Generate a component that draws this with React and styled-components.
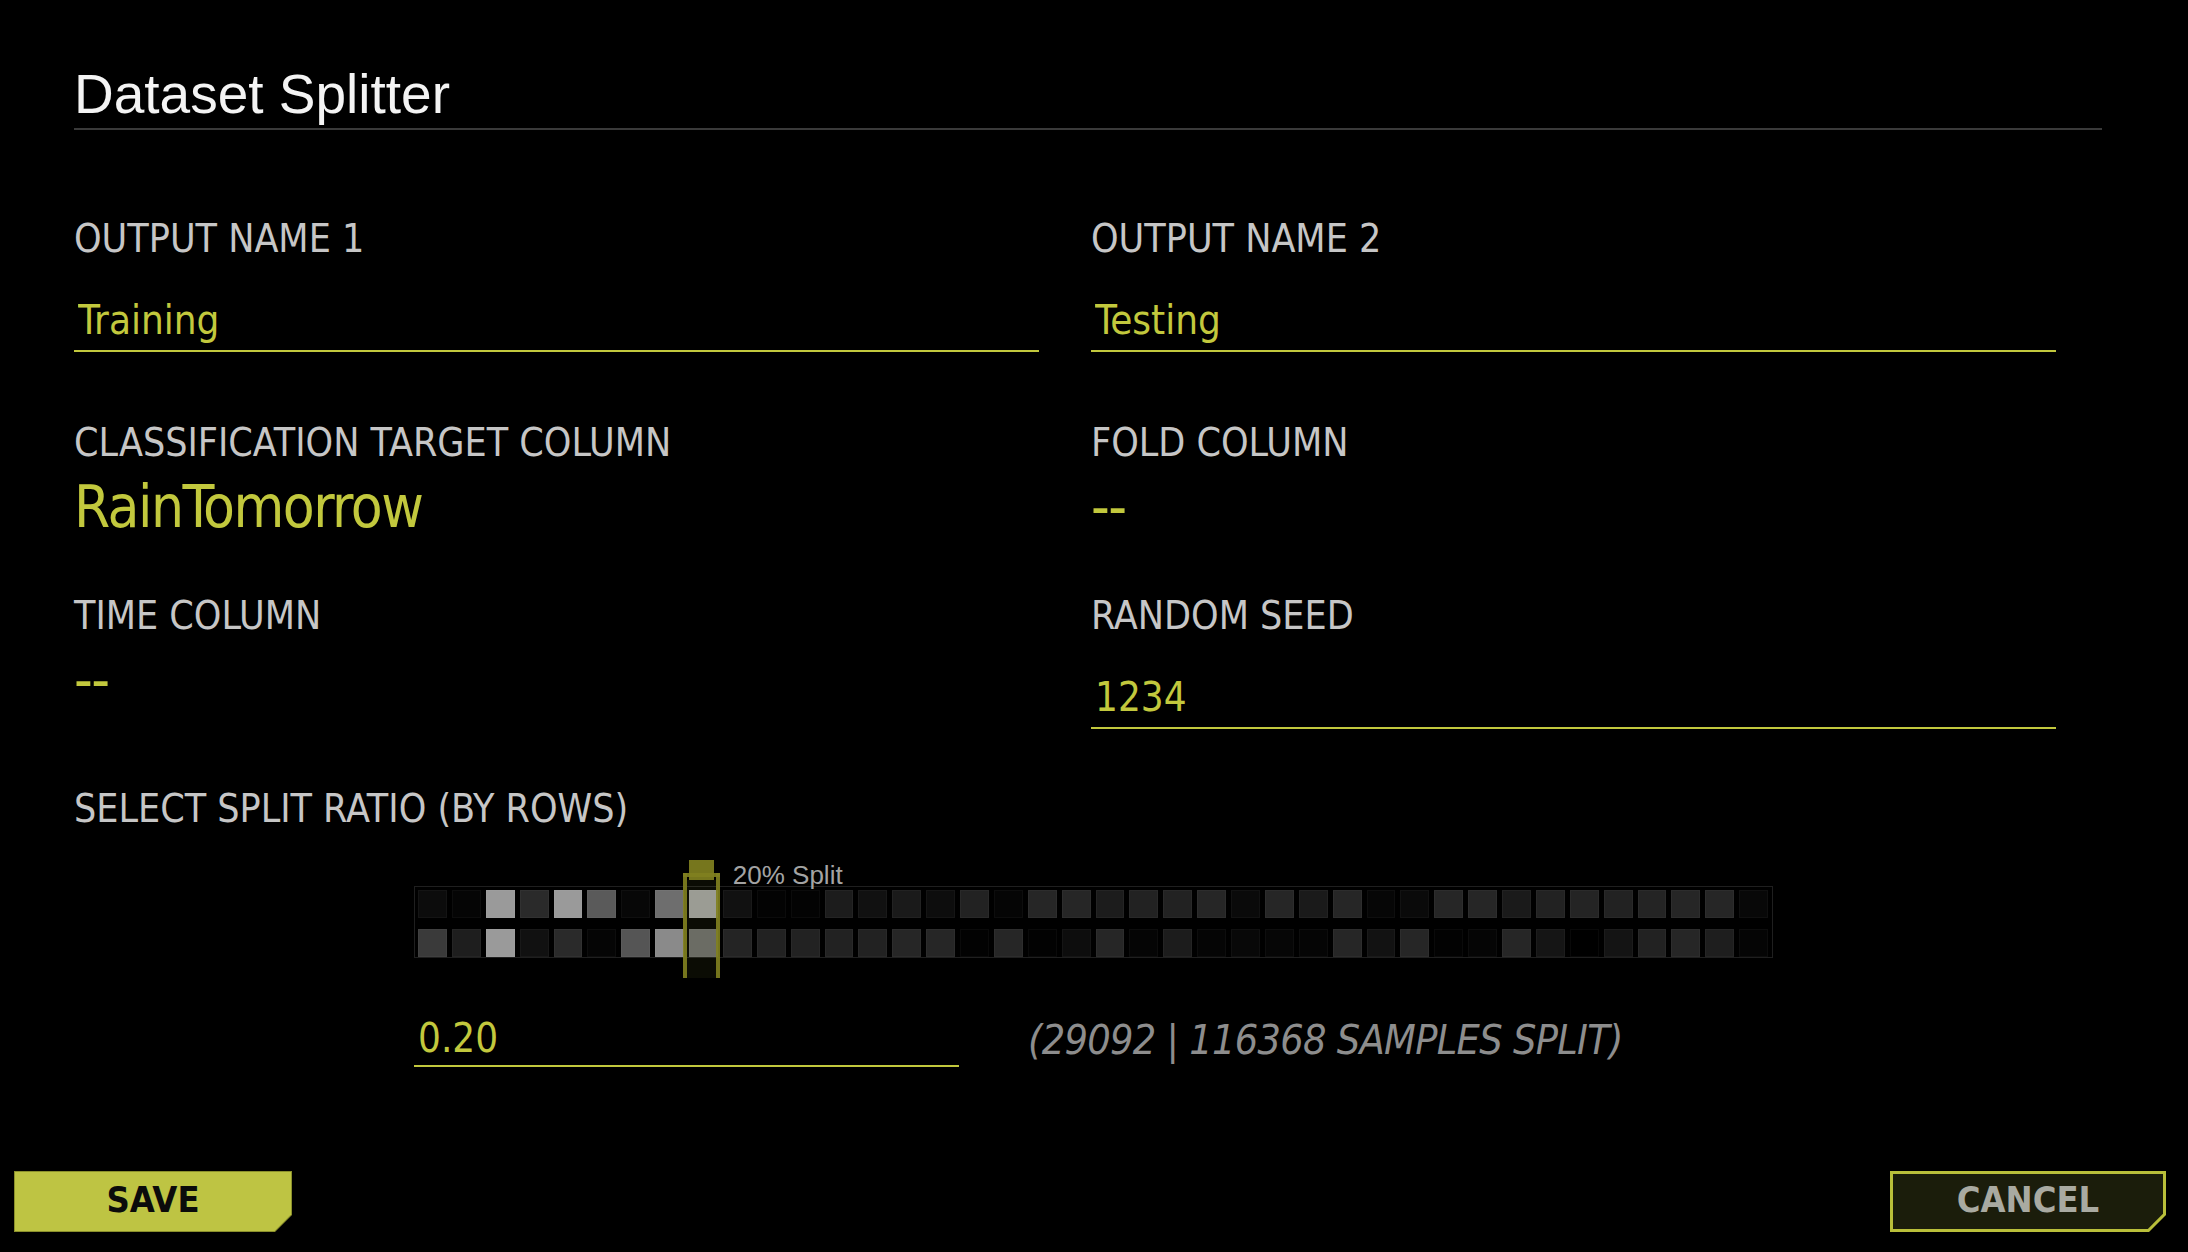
import React from "react"
import styled, { createGlobalStyle } from "styled-components"

const NARROW = `"Liberation Sans Narrow", "Arial Narrow", "DejaVu Sans Condensed", "Liberation Sans", sans-serif`
const SANS = `"Liberation Sans", Arial, sans-serif`
const LIME = "#c2c83d"

// grey levels of the row sample preview, two rows of 40
const ROWS = [
  ["0c", "05", "9a", "2a", "9a", "5a", "07", "6e", "9a", "11", "03", "03", "1c", "11", "1a", "0d", "22", "05", "26", "26",
   "1c", "22", "22", "26", "0a", "26", "1a", "26", "06", "0a", "26", "26", "1a", "22", "24", "22", "24", "26", "26", "08"],
  ["3a", "1e", "9a", "11", "2a", "05", "55", "8a", "66", "24", "22", "22", "22", "22", "26", "26", "02", "26", "02", "0d",
   "26", "05", "1c", "05", "08", "06", "05", "26", "12", "26", "02", "05", "26", "15", "00", "14", "22", "26", "1e", "05"],
]

const SPLIT = 0.2

const GlobalStyle = createGlobalStyle`
  html, body {
    margin: 0;
    background: #000;
  }
  body {
    font-family: ${SANS};
    color: #c6c6c6;
  }
  * {
    box-sizing: border-box;
  }
`

const Page = styled.div`
  min-height: 100vh;
  display: flex;
  flex-direction: column;
`

const Main = styled.main`
  padding: 67px 86px 0 74px;
`

const Header = styled.header`
  padding-bottom: 6px;
  border-bottom: 2px solid #3a3a3a;
`

const Title = styled.h1`
  margin: 0;
  font: 400 55px/1 ${SANS};
  color: #f4f4f4;
`

const FormGrid = styled.div`
  display: grid;
  grid-template-columns: 965px 965px;
  column-gap: 52px;
  row-gap: 56px;
  margin-top: 88px;
`

const Field = styled.div`
  display: flex;
  flex-direction: column;
`

const Label = styled.div`
  font: 400 39px/41px ${NARROW};
  color: #c6c6c6;
  white-space: nowrap;
`

const TextInput = styled.input`
  width: ${({ $width }) => $width || "100%"};
  height: ${({ $pad }) => 44 + $pad}px;
  margin: ${({ $top }) => $top}px 0 ${({ $bottom }) => $bottom}px;
  padding: 0 0 ${({ $pad }) => $pad}px 4px;
  border: none;
  border-bottom: 2px solid ${LIME};
  background: transparent;
  color: ${LIME};
  font: 400 40px/42px ${NARROW};
  outline: none;
`

const BigValue = styled.div`
  margin-top: 13px;
  font: 400 58px/63px ${NARROW};
  letter-spacing: -1.5px;
  color: ${LIME};
`

const SplitSection = styled.section`
  margin-top: 45px;
`

const SplitBody = styled.div`
  margin-left: 340px;
  width: 1359px;
`

const HeatmapWrap = styled.div`
  position: relative;
  margin-top: 57px;
`

const HeatBox = styled.div`
  display: grid;
  grid-template-columns: repeat(40, 1fr);
  column-gap: 5px;
  row-gap: 11px;
  padding: 3px 4px 0 3px;
  border: 1px solid #1f1f1f;
`

const Cell = styled.div`
  height: 28px;
  background: ${({ $shade }) => $shade};
  border: 1px solid rgba(255, 255, 255, 0.035);
`

const Handle = styled.svg`
  position: absolute;
  top: -26px;
  overflow: visible;
`

const SplitTag = styled.span`
  position: absolute;
  top: -24px;
  font: 400 26px/1 ${SANS};
  color: #a3a3a3;
  white-space: nowrap;
`

const RatioRow = styled.div`
  display: flex;
  align-items: flex-start;
  gap: 69px;
  margin-top: 59px;
`

const SampleCount = styled.div`
  margin-top: 3px;
  font: italic 400 41px/1 ${NARROW};
  letter-spacing: -0.7px;
  color: #8d8d8d;
  white-space: nowrap;
`

const Footer = styled.footer`
  margin-top: auto;
  display: flex;
  justify-content: space-between;
  padding: 0 22px 20px 14px;
`

const cut = (n) =>
  `polygon(0 0, 100% 0, 100% calc(100% - ${n}px), calc(100% - ${n}px) 100%, 0 100%)`

const ButtonFrame = styled.button`
  width: ${({ $width }) => $width}px;
  height: 61px;
  padding: ${({ $edge }) => $edge}px;
  border: none;
  background: ${({ $edgeColor }) => $edgeColor};
  clip-path: ${cut(17)};
  cursor: pointer;
`

const ButtonFace = styled.span`
  display: flex;
  align-items: center;
  justify-content: center;
  width: 100%;
  height: 100%;
  padding-bottom: 4px;
  background: ${({ $face }) => $face};
  color: ${({ $ink }) => $ink};
  font: 700 36px/1 ${NARROW};
  clip-path: ${({ $edge }) => cut(17 - $edge * 0.6)};
`

const Button = ({ children, width, edge, edgeColor, face, ink }) => (
  <ButtonFrame $width={width} $edge={edge} $edgeColor={edgeColor}>
    <ButtonFace $edge={edge} $face={face} $ink={ink}>
      {children}
    </ButtonFace>
  </ButtonFrame>
)

const SplitHandle = ({ ratio }) => (
  <>
    <Handle
      width="37"
      height="118"
      viewBox="0 0 37 118"
      style={{ left: `calc(${ratio * 100}% - 3px)` }}
    >
      <rect x="4" y="20" width="29" height="98" fill="rgba(190,196,65,0.06)" />
      <g fill="rgba(128,128,32,0.92)">
        <rect x="6" y="0" width="25" height="20" />
        <rect x="0" y="13" width="37" height="4" />
        <rect x="0" y="13" width="4" height="105" />
        <rect x="33" y="13" width="4" height="105" />
      </g>
    </Handle>
    <SplitTag style={{ left: `calc(${ratio * 100}% + 47px)` }}>
      {Math.round(ratio * 100)}% Split
    </SplitTag>
  </>
)

const App = () => {
  return (
    <Page>
      <GlobalStyle />
      <Main>
        <Header>
          <Title>Dataset Splitter</Title>
        </Header>

        <FormGrid>
          <Field>
            <Label>OUTPUT NAME 1</Label>
            <TextInput defaultValue="Training" $top={40} $bottom={14} $pad={9} />
          </Field>
          <Field>
            <Label>OUTPUT NAME 2</Label>
            <TextInput defaultValue="Testing" $top={40} $bottom={14} $pad={9} />
          </Field>

          <Field>
            <Label>CLASSIFICATION TARGET COLUMN</Label>
            <BigValue>RainTomorrow</BigValue>
          </Field>
          <Field>
            <Label>FOLD COLUMN</Label>
            <BigValue>--</BigValue>
          </Field>

          <Field>
            <Label>TIME COLUMN</Label>
            <BigValue>--</BigValue>
          </Field>
          <Field>
            <Label>RANDOM SEED</Label>
            <TextInput defaultValue="1234" $top={40} $bottom={14} $pad={9} />
          </Field>
        </FormGrid>

        <SplitSection>
          <Label>SELECT SPLIT RATIO (BY ROWS)</Label>
          <SplitBody>
            <HeatmapWrap>
              <HeatBox>
                {ROWS.map((row, r) =>
                  row.map((v, c) => <Cell key={`${r}-${c}`} $shade={`#${v}${v}${v}`} />)
                )}
              </HeatBox>
              <SplitHandle ratio={SPLIT} />
            </HeatmapWrap>

            <RatioRow>
              <TextInput defaultValue="0.20" $width="545px" $top={0} $bottom={0} $pad={6} />
              <SampleCount>(29092 | 116368 SAMPLES SPLIT)</SampleCount>
            </RatioRow>
          </SplitBody>
        </SplitSection>
      </Main>

      <Footer>
        <Button width={278} edge={1} edgeColor="#8b902c" face="#bec443" ink="#0b0b0b">
          SAVE
        </Button>
        <Button width={276} edge={3} edgeColor="#b9bf3a" face="#1b1d0b" ink="#a9aaa1">
          CANCEL
        </Button>
      </Footer>
    </Page>
  )
}

export default App
